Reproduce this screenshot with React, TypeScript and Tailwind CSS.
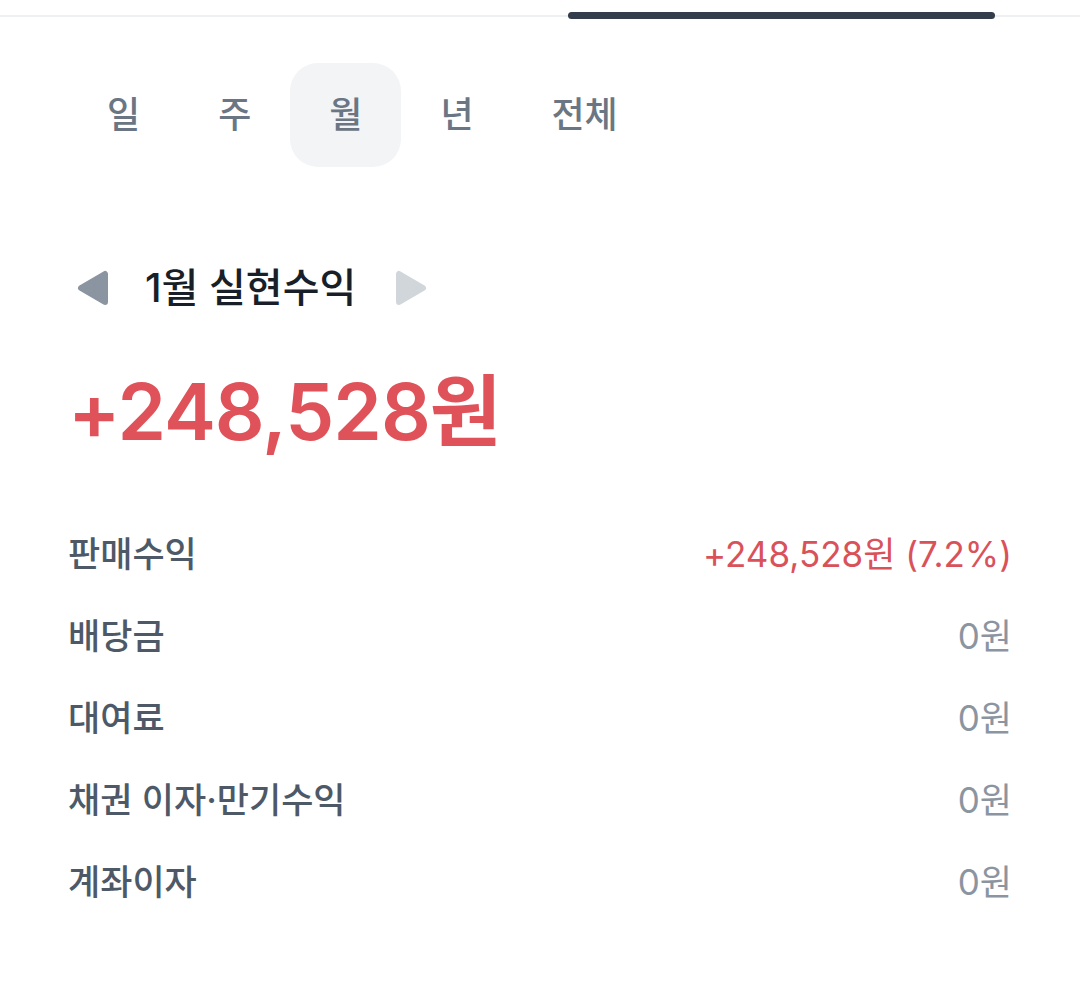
import React from "react";

const font = { fontFamily: 'Inter, "Noto Sans CJK KR", "Noto Sans", sans-serif' };

function Tri({ dir, color }: { dir: "left" | "right"; color: string }) {
  const d = dir === "left" ? "M29 4 L29 32 L5 18 Z" : "M5 4 L5 32 L29 18 Z";
  return (
    <svg width="34" height="36" viewBox="0 0 34 36">
      <path d={d} fill={color} stroke={color} strokeWidth="6" strokeLinejoin="round" />
    </svg>
  );
}

const rows: [string, string, boolean][] = [
  ["판매수익", "+248,528원 (7.2%)", true],
  ["배당금", "0원", false],
  ["대여료", "0원", false],
  ["채권 이자·만기수익", "0원", false],
  ["계좌이자", "0원", false],
];

export default function App() {
  const tabs = ["일", "주", "월", "년", "전체"];
  return (
    <div className="w-[1080px] h-[984px] bg-white" style={font}>
      <div className="relative h-[31px]">
        <div className="absolute left-0 right-0 top-[15px] h-[2px] bg-[#eef0f2]" />
        <div className="absolute left-[568px] w-[427px] top-[12px] h-[7px] rounded-full bg-[#333d4b]" />
      </div>
      <div className="flex pl-[68px] pt-[32px]">
        {tabs.map((t) => (
          <div
            key={t}
            className={`h-[104px] px-[39px] flex items-center justify-center rounded-[28px] text-[36px] font-medium text-[#6b7684] ${
              t === "월" ? "bg-[#f2f4f6]" : ""
            }`}
          >
            {t}
          </div>
        ))}
      </div>
      <div className="flex items-center pl-[76px] mt-[96px] h-[50px]">
        <Tri dir="left" color="#8b95a1" />
        <span className="ml-[35px] text-[40px] font-medium text-[#191f28] leading-none">1월 실현수익</span>
        <span className="ml-[38px]">
          <Tri dir="right" color="#d1d6db" />
        </span>
      </div>
      <div className="pl-[68px] mt-[60px] text-[78px] font-semibold text-[#e05259] leading-none tracking-[-1px]">
        +248,528원
      </div>
      <div className="px-[68px] mt-[62px] flex flex-col">
        {rows.map(([l, v, red]) => (
          <div key={l} className="flex justify-between items-center h-[82px]">
            <span className="text-[35px] font-medium text-[#4e5968]">{l}</span>
            <span className={`text-[35px] ${red ? "text-[#d9525a]" : "text-[#8b95a1]"}`}>{v}</span>
          </div>
        ))}
      </div>
    </div>
  );
}
